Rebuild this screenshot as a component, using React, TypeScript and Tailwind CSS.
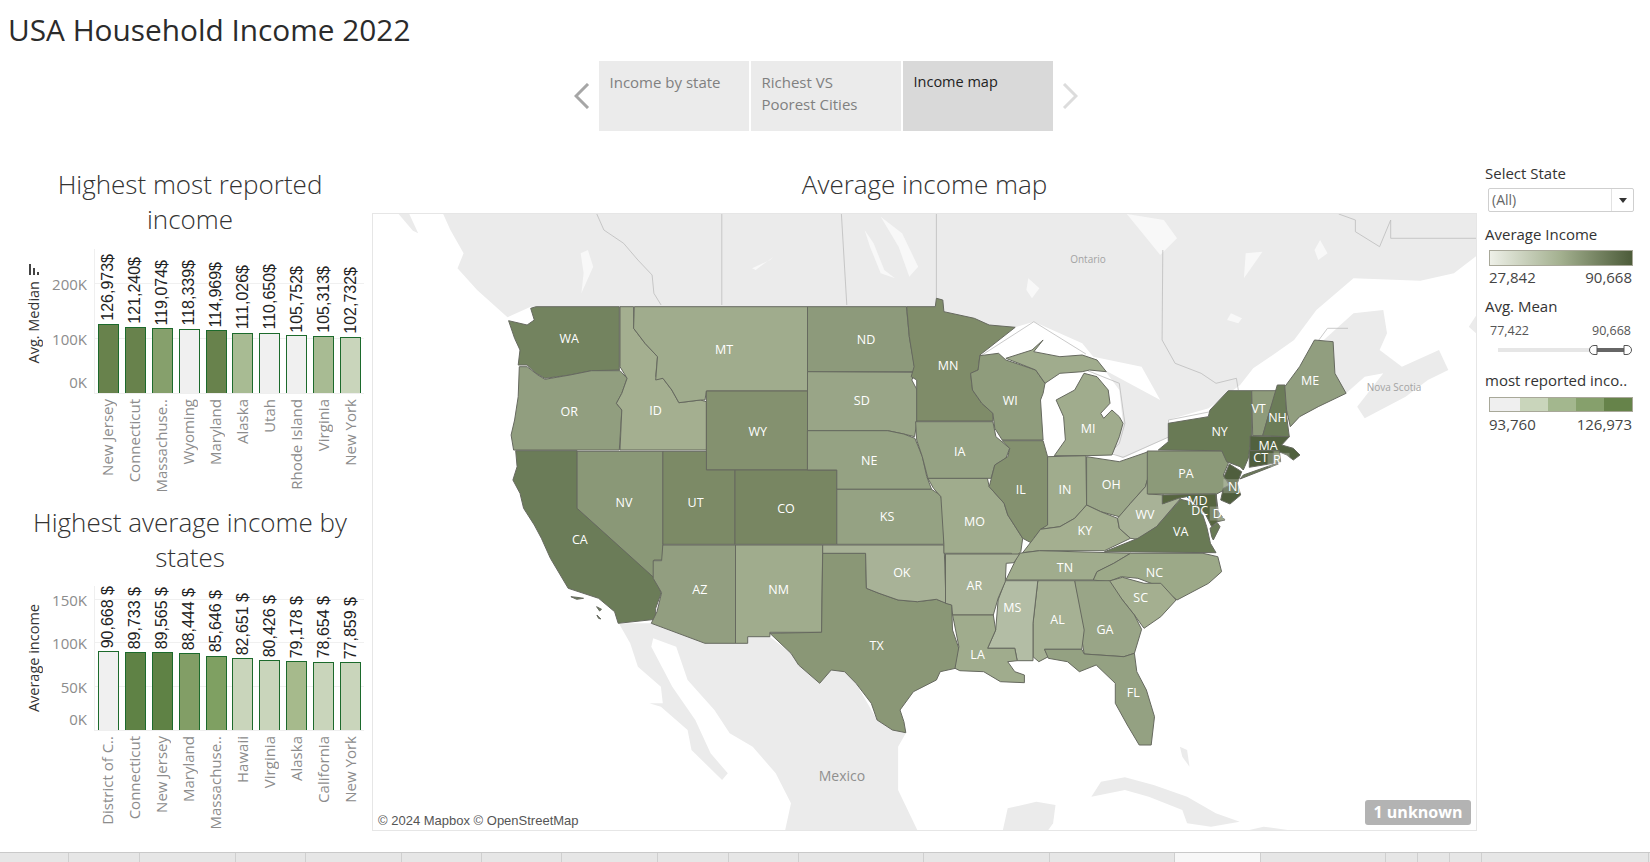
import React from "react";

type Z = { ox: number; sx: number; oy: number; sy: number };
const Z5: Z = { ox: 370, sx: 2.8, oy: 210, sy: 3 };
const Z6: Z = { ox: 900, sx: 2.69, oy: 210, sy: 3 };
const Z7: Z = { ox: 370, sx: 2.613, oy: 540, sy: 3 };
const Z8: Z = { ox: 900, sx: 2.09, oy: 540, sy: 3 };
const Z9: Z = { ox: 1130, sx: 3, oy: 380, sy: 3 };

const conv = (s: string, z: Z) =>
  s
    .trim()
    .split(/\s+/)
    .map((p) => {
      const [x, y] = p.split(",").map(Number);
      return `${(z.ox + x / z.sx).toFixed(1)},${(z.oy + y / z.sy).toFixed(1)}`;
    })
    .join(" ");

const LAND: [string, Z][] = [
  ["205,12 1568,12 1568,290 450,290 385,322 300,240 245,175 262,130 225,60", Z5],
  ["80,12 110,12 135,70 120,62", Z5],
  ["0,12 1560,12 1560,130 1490,190 1400,212 1220,205 1120,300 1060,390 990,445 950,475 915,525 830,595 720,630 725,680 600,745 565,725 600,640 590,540 550,480 700,570 650,470 520,440 490,400 360,335 310,352 240,345 115,305 98,265 95,290 0,290", Z6],
  ["1165,395 1140,390 1220,310 1300,300 1310,370 1290,420 1350,470 1450,420 1475,480 1420,510 1360,560 1250,625 1230,590 1300,490 1250,500 1200,550 1170,490", Z6],
  ["1560,300 1530,350 1560,380", Z6],
  ["650,250 735,250 875,310 987,310 987,290 1045,290 1100,340 1120,375 1175,430 1205,390 1240,395 1270,430 1325,540 1365,570 1400,580 1380,620 1380,750 1430,870 1085,870 1100,790 1060,700 1000,620 940,580 900,510 830,420 800,320 740,295 735,320 790,440 850,540 890,640 935,700 920,720 840,630 830,570 760,500 730,490 765,490 760,440 700,380 680,310", Z7],
  ["400,770 420,725 470,712 530,735 600,770 660,820 710,845 650,860 600,850 590,810 520,770 470,750", Z8],
  ["215,870 225,805 285,785 325,795 320,850 310,870", Z8],
  ["0,775 35,870 0,870", Z8],
  ["730,870 760,860 810,870", Z8],
  ["585,620 600,630 605,680 590,650", Z8],
];

const WHITE: [string, Z][] = [
  ["590,130 610,120 625,170 600,230 592,250 598,190", Z5],
  ["1120,150 1130,140 1080,180 1070,175", Z5],
  ["1385,60 1410,100 1440,180 1470,205 1430,190 1400,110", Z5],
  ["1430,20 1490,70 1535,170 1510,200 1480,110", Z5],
  ["345,205 375,235 355,265 340,240", Z6],
  ["890,310 920,325 910,340 880,330", Z6],
  ["1130,90 1150,130 1125,150 1115,120", Z6],
  ["930,130 975,125 925,205", Z6],
  ["610,12 710,30 745,85 700,135 660,80", Z6],
];

const LINES: [string, Z][] = [
  ["985,12 985,285", Z5],
  ["1320,12 1335,285", Z5],
  ["635,12 655,60 710,100 750,150 790,195 795,250 815,285", Z5],
  ["98,12 98,265", Z6],
  ["707,120 705,390 740,460 810,490 850,520 905,505 910,540", Z6],
  ["1180,12 1225,30 1225,65 1290,110 1320,30 1320,85 1560,85", Z6],
  ["1120,400 1150,355 1205,355", Z6],
  ["218,437 360,335 500,432", Z6],
  ["505,482 590,520 605,640 590,700 565,730 600,742 725,680 722,630 835,605", Z6],
];

const STATES: [string, Z, string][] = [
  ["465,290 698,290 698,480 620,482 560,495 490,505 465,490 440,465 415,465 420,420 405,385 388,332 440,345 460,330 450,295", Z5, "#73835f"],
  ["418,470 440,470 470,495 490,508 560,495 620,482 700,482 720,505 705,550 690,580 705,600 698,720 402,720 395,675 405,630 415,560", Z5, "#919e7f"],
  ["408,722 580,722 580,895 800,1105 815,1150 800,1195 800,1228 695,1240 685,1205 640,1165 555,1135 505,1045 480,985 460,945 430,895 420,850 400,810 412,770", Z5, "#6b7c58"],
  ["525,170 540,172 558,175 540,178", Z7, "#6b7c58"],
  ["592,200 605,208 600,213", Z7, "#6b7c58"],
  ["593,225 603,237 597,235", Z7, "#6b7c58"],
  ["580,724 820,724 820,1050 795,1050 797,1105 580,895", Z5, "#8a9877"],
  ["700,290 738,290 738,355 770,400 805,440 800,500 820,505 845,540 865,578 925,570 942,575 942,720 700,720 705,600 690,580 705,550 720,505 700,470", Z5, "#a4af90"],
  ["740,290 1225,290 1225,543 942,543 938,570 925,570 865,578 845,540 820,505 800,510 805,440 770,400 738,355", Z5, "#a0ac8d"],
  ["942,543 1225,543 1225,780 942,780", Z5, "#84916f"],
  ["820,724 942,724 942,780 1022,780 1022,1003 820,1003", Z5, "#7c8a66"],
  ["1022,780 1307,780 1307,1003 1022,1003", Z5, "#788662"],
  ["765,15 955,15 955,310 875,310 735,250 750,215 762,158 740,115 740,62 762,62", Z7, "#929e80"],
  ["955,15 1183,15 1180,277 1045,277 1045,290 987,290 987,310 955,310", Z7, "#a0ac8d"],
  ["1183,40 1295,40 1297,145 1330,160 1380,180 1430,185 1480,178 1520,195 1522,270 1540,330 1530,385 1490,395 1480,420 1420,455 1385,510 1395,545 1400,578 1365,570 1325,540 1310,490 1270,430 1240,395 1205,390 1175,430 1120,375 1100,340 1045,280 1180,277", Z7, "#8a9776"],
  ["1183,15 1500,15 1505,190 1480,178 1430,185 1380,180 1330,160 1297,145 1295,40 1183,40", Z7, "#a8b297"],
  ["1225,290 1502,290 1510,380 1527,485 1225,485", Z5, "#8d9a7b"],
  ["1225,485 1527,487 1517,510 1532,540 1532,630 1525,680 1495,672 1450,662 1225,662", Z5, "#99a587"],
  ["-249,662 -33,662 10,672 40,685 60,740 72,800 85,838 -170,838 -170,780 -249,780", Z6, "#95a283"],
  ["-170,838 85,838 108,855 118,885 118,1003 -170,1003", Z6, "#95a283"],
  ["75,805 235,805 240,830 280,880 290,915 330,985 325,1025 300,1055 285,1055 300,1030 118,1030 118,1003 110,860 90,835", Z6, "#a0ac8d"],
  ["42,635 250,635 258,680 295,715 285,745 255,765 245,805 75,805 60,740 45,690", Z6, "#95a283"],
  ["18,290 95,290 98,265 115,270 118,305 200,325 240,345 310,352 215,435 210,480 190,490 195,540 220,580 250,610 250,633 45,633 45,510 30,500 38,470 25,380", Z6, "#7f8c69"],
  ["215,437 265,430 285,450 365,480 390,520 385,550 378,570 385,690 275,690 255,655 250,610 220,580 195,540 190,490 210,480", Z6, "#8f9c7c"],
  ["285,445 355,420 385,390 360,425 430,440 490,435 530,450 555,485 510,480 490,485 430,490 390,520 365,480", Z6, "#a0ac8d"],
  ["415,737 445,690 440,620 420,570 470,540 495,490 530,500 560,540 565,580 540,610 548,625 570,600 590,620 600,640 590,680 570,735 500,737", Z6, "#a0ac8d"],
  ["275,692 385,692 397,740 397,950 378,960 360,985 355,1000 330,985 290,915 280,880 240,830 255,765 290,740 295,715", Z6, "#84916f"],
  ["397,740 500,737 502,885 470,925 430,950 378,958 397,945", Z6, "#a0ac8d"],
  ["502,740 590,755 668,725 668,800 660,830 620,880 590,920 540,905 502,885", Z6, "#9aa688"],
  ["330,1028 360,985 378,958 430,950 470,925 502,885 540,905 585,925 590,955 620,985 550,1022 375,1022", Z6, "#a4af90"],
  ["668,800 668,852 710,855 710,880 740,860 755,865 690,950 640,988 620,985 590,955 585,925 620,880 660,830", Z6, "#a8b297"],
  ["550,1025 640,985 690,950 755,868 780,875 810,900 825,950 835,1000 850,1028", Z6, "#697a55"],
  ["285,1110 320,1030 375,1022 620,1030 575,1060 530,1085 520,1110", Z6, "#a0ac8d"],
  ["520,1110 530,1085 575,1060 620,1030 815,1030 855,1040 865,1085 830,1120 745,1170 700,1130 640,1105 595,1100 560,1115", Z6, "#9ca988"],
  ["432,125 465,112 510,130 545,130 577,180 545,230 510,265 490,225 465,180", Z8, "#a4af90"],
  ["365,122 438,122 465,180 490,225 505,268 490,340 468,350 385,342 378,280", Z8, "#99a587"],
  ["288,122 365,122 385,270 380,328 302,328 310,350 290,365 278,350 278,250", Z8, "#a6b194"],
  ["220,122 288,122 278,250 278,362 245,362 240,325 183,325 200,270 205,180", Z8, "#b3bda5"],
  ["95,42 250,42 238,68 222,70 220,125 205,175 195,225 110,225 108,195 95,190", Z8, "#a8b297"],
  ["110,225 195,225 200,270 183,325 240,325 245,362 225,365 240,395 260,405 260,428 210,425 175,395 125,392 115,385 123,320", Z8, "#a0ac8d"],
  ["302,328 380,328 385,342 468,350 490,340 495,395 515,450 532,530 525,615 500,615 475,555 450,490 450,430 410,375 375,395 350,365 310,355", Z8, "#94a182"],
  ["52,213 278,213 295,250 280,285 300,320 260,342 52,342", Z9, "#8c9a79"],
  ["85,210 115,185 115,130 235,110 240,90 295,32 365,32 365,165 355,235 340,270 330,260 290,245 275,212", Z9, "#697a55"],
  ["340,285 440,250 445,252 330,297", Z9, "#697a55"],
  ["365,32 442,32 420,90 398,167 368,167", Z9, "#8e9b7b"],
  ["442,15 465,15 470,110 478,170 398,167 420,90", Z9, "#6b7c58"],
  ["1035,530 1075,470 1115,390 1165,395 1170,490 1200,550 1125,590 1075,620 1050,650 1040,600", Z6, "#919e7f"],
  ["360,168 478,170 455,195 490,205 510,225 490,240 470,225 440,212 360,212", Z9, "#51613f"],
  ["358,212 430,212 430,250 358,262", Z9, "#4f5e3d"],
  ["430,212 448,212 452,245 432,250", Z9, "#7d8a67"],
  ["298,252 335,275 322,310 332,345 300,372 272,360 280,325 300,315 282,290", Z9, "#4f5e3d"],
  ["97,345 258,342 262,425 245,440 225,400 205,380 170,350 145,355 97,372", Z9, "#56653f"],
  ["258,342 265,395 285,420 262,425", Z9, "#7d8a67"],
  ["240,445 262,428 270,440 250,480 245,470", Z9, "#697a55"],
];

const R = 1.0523;
const LABELS: [string, number, number][] = [
  ["WA", 541, 322], ["OR", 541, 391], ["CA", 551, 513], ["NV", 593, 478], ["ID", 623, 390], ["MT", 688, 332],
  ["WY", 720, 410], ["UT", 661, 478], ["CO", 747, 483], ["AZ", 665, 560], ["NM", 740, 560], ["ND", 823, 323],
  ["SD", 819, 381], ["NE", 826, 438], ["KS", 843, 491], ["OK", 857, 544], ["TX", 833, 613], ["MN", 901, 347],
  ["IA", 912, 429], ["MO", 926, 496], ["AR", 926, 556], ["LA", 929, 622], ["MS", 962, 577], ["AL", 1005, 589],
  ["GA", 1050, 598], ["FL", 1077, 658], ["WI", 960, 381], ["IL", 970, 465], ["IN", 1012, 465], ["OH", 1056, 460],
  ["KY", 1031, 504], ["TN", 1012, 539], ["MI", 1034, 407], ["WV", 1088, 489], ["VA", 1122, 505], ["NC", 1097, 544],
  ["SC", 1084, 568], ["PA", 1127, 450], ["NY", 1159, 410], ["VT", 1196, 388], ["NH", 1214, 397], ["ME", 1245, 362],
  ["MA", 1205, 423], ["CT", 1198, 435], ["RI", 1215, 437], ["NJ", 1173, 462], ["MD", 1138, 476], ["DC", 1140, 485],
  ["DE", 1160, 488],
];
const HALO = ["RI", "NJ", "DE"];

function UsMap() {
  return (
    <svg viewBox="373 214 1103 616" className="block w-full h-full">
      {LAND.map(([p, z], i) => (
        <polygon key={i} points={conv(p, z)} fill="#ebebeb" />
      ))}
      {WHITE.map(([p, z], i) => (
        <polygon key={i} points={conv(p, z)} fill="#f8f8f8" />
      ))}
      {LINES.map(([p, z], i) => (
        <polyline key={i} points={conv(p, z)} fill="none" stroke="#bdbdbd" strokeWidth="0.8" />
      ))}
      {STATES.map(([p, z, c], i) => (
        <polygon key={i} points={conv(p, z)} fill={c} stroke="#66695f" strokeWidth="1" strokeLinejoin="round" />
      ))}
      <text x={1088} y={263} fontSize="10" fill="#a3a3a3" textAnchor="middle">Ontario</text>
      <text x={1394} y={391} fontSize="10" fill="#a3a3a3" textAnchor="middle">Nova Scotia</text>
      <text x={842} y={781} fontSize="14" fill="#8f8f8f" textAnchor="middle">Mexico</text>
      {LABELS.filter((l) => HALO.includes(l[0])).map(([t, x, y]) => (
        <rect key={t} x={x * R - 11} y={y * R - 7} width="22" height="14" fill="#ffffff" opacity="0.22" />
      ))}
      {LABELS.map(([t, x, y]) => (
        <text key={t} x={x * R} y={y * R + 4.5} fontSize="12.5" fill="#ffffff" textAnchor="middle">{t}</text>
      ))}
    </svg>
  );
}

type Bar = { name: string; value: number; label: string; color: string };

const CHART1: Bar[] = [
  { name: "New Jersey", value: 126973, label: "126,973$", color: "#68824c" },
  { name: "Connecticut", value: 121240, label: "121,240$", color: "#68824c" },
  { name: "Massachuse..", value: 119074, label: "119,074$", color: "#86a06c" },
  { name: "Wyoming", value: 118339, label: "118,339$", color: "#f0f0f0" },
  { name: "Maryland", value: 114969, label: "114,969$", color: "#68824c" },
  { name: "Alaska", value: 111026, label: "111,026$", color: "#a8bb93" },
  { name: "Utah", value: 110650, label: "110,650$", color: "#f0f0f0" },
  { name: "Rhode Island", value: 105752, label: "105,752$", color: "#f0f0f0" },
  { name: "Virginia", value: 105313, label: "105,313$", color: "#a8bb93" },
  { name: "New York", value: 102732, label: "102,732$", color: "#c9d5bb" },
];

const CHART2: Bar[] = [
  { name: "District of C..", value: 90668, label: "90,668 $", color: "#f0f0f0" },
  { name: "Connecticut", value: 89733, label: "89,733 $", color: "#5f8245" },
  { name: "New Jersey", value: 89565, label: "89,565 $", color: "#5f8245" },
  { name: "Maryland", value: 88444, label: "88,444 $", color: "#829e66" },
  { name: "Massachuse..", value: 85646, label: "85,646 $", color: "#7fa062" },
  { name: "Hawaii", value: 82651, label: "82,651 $", color: "#c9d5bb" },
  { name: "Virginia", value: 80426, label: "80,426 $", color: "#c9d5bb" },
  { name: "Alaska", value: 79178, label: "79,178 $", color: "#a6ba8c" },
  { name: "California", value: 78654, label: "78,654 $", color: "#c9d5bb" },
  { name: "New York", value: 77859, label: "77,859 $", color: "#c9d5bb" },
];

function Chart({
  axis,
  sortIcon,
  data,
  ticks,
  pxPerUnit,
  labelsHeight,
}: {
  axis: string;
  sortIcon?: boolean;
  data: Bar[];
  ticks: [string, number][];
  pxPerUnit: number;
  labelsHeight: number;
}) {
  return (
    <div className="flex flex-col">
      <div className="flex h-[145px]">
        <div className="w-[25px] shrink-0" />
        <div className={"w-[18px] shrink-0 flex flex-col items-center justify-center gap-[5px] " + (sortIcon ? "pb-[15px]" : "")}>
          {sortIcon && (
            <svg width="11" height="12" viewBox="0 0 11 12">
              <rect x="0" y="0" width="2" height="11" fill="#444" />
              <rect x="4" y="4" width="2" height="7" fill="#444" />
              <rect x="8" y="8" width="2" height="3" fill="#444" />
            </svg>
          )}
          <span className="[writing-mode:vertical-rl] rotate-180 text-[14.5px] leading-[18px] font-medium text-[#333] whitespace-nowrap">{axis}</span>
        </div>
        <div className="w-[51px] shrink-0 relative">
          {ticks.map(([t, v]) => (
            <div
              key={t}
              className="absolute right-[7px] text-[15px] leading-[20px] text-[#8c8c8c]"
              style={{ bottom: v === 0 ? 2 : v * pxPerUnit - 9 }}
            >
              {t}
            </div>
          ))}
        </div>
        <div className="relative w-[270px] border-l border-b border-[#efefef] flex items-stretch">
          {ticks.map(([t, v]) =>
            v === 0 ? null : (
              <div key={t} className="absolute left-0 right-0 h-px bg-[#f0f0f0]" style={{ bottom: v * pxPerUnit }} />
            )
          )}
          {data.map((d) => (
            <div key={d.name} className="relative w-[27px] flex flex-col items-center justify-end">
              <span className="[writing-mode:vertical-rl] rotate-180 font-['Liberation_Sans',sans-serif] text-[16px] leading-[20px] text-[#222] whitespace-nowrap mb-[3px]">{d.label}</span>
              <div
                className="w-[21px] border-[1.5px] border-b-0 border-[#1c6a2c]"
                style={{ height: d.value * pxPerUnit, backgroundColor: d.color }}
              />
            </div>
          ))}
        </div>
      </div>
      <div className="flex" style={{ height: labelsHeight }}>
        <div className="w-[93px] shrink-0" />
        {data.map((d) => (
          <div key={d.name} className="w-[27px] flex justify-center items-start pt-[5px]">
            <span className="[writing-mode:vertical-rl] rotate-180 text-[15px] leading-[20px] text-[#8c8c8c] whitespace-nowrap">{d.name}</span>
          </div>
        ))}
      </div>
    </div>
  );
}

const Heading = ({ children, className = "" }: { children: React.ReactNode; className?: string }) => (
  <h2 className={"text-center text-[26px] leading-[35px] font-light text-[#333] " + className}>{children}</h2>
);

const STRIP = [69, 71, 96, 70, 96, 80, 80, 96, 71, 70, 125, 126, 125, 86, 125, 32, 32, 32, 167];

export default function App() {
  return (
    <div className="h-[862px] w-[1650px] overflow-hidden bg-white flex flex-col font-['Open_Sans',sans-serif]">
      <div className="h-[61px] shrink-0 pl-[8px] pt-[10px]">
        <h1 className="text-[29.8px] leading-[40px] font-normal text-[#2b2b2b]">USA Household Income 2022</h1>
      </div>

      <div className="h-[70px] shrink-0 flex items-center justify-center gap-[2px] pl-[1px]">
        <svg width="16" height="26" viewBox="0 0 16 26" className="mr-[7px]">
          <polyline points="14,1 2,13 14,25" fill="none" stroke="#a6a6a6" strokeWidth="3" />
        </svg>
        <div className="w-[150px] h-[70px] bg-[#ebebeb] px-[11px] pt-[10px] text-[15px] leading-[22px] text-[#808080]">Income by state</div>
        <div className="w-[150px] h-[70px] bg-[#ebebeb] px-[11px] pt-[10px] text-[15px] leading-[22px] text-[#808080]">Richest VS<br />Poorest Cities</div>
        <div className="w-[150px] h-[70px] bg-[#d9d9d9] px-[11px] pt-[10px] text-[14.5px] leading-[22px] text-[#222]">Income map</div>
        <svg width="16" height="26" viewBox="0 0 16 26" className="ml-[7px]">
          <polyline points="2,1 14,13 2,25" fill="none" stroke="#dcdcdc" strokeWidth="3" />
        </svg>
      </div>

      <div className="h-[36px] shrink-0" />

      <div className="h-[685px] shrink-0 flex">
        <div className="w-[372px] shrink-0 flex flex-col">
          <Heading className="pl-[8px]">Highest most reported<br />income</Heading>
          <div className="h-[12px]" />
          <Chart axis="Avg. Median" sortIcon data={CHART1} ticks={[["200K", 200000], ["100K", 100000], ["0K", 0]]} pxPerUnit={0.000545} labelsHeight={111} />
          <Heading className="pl-[8px]">Highest average income by<br />states</Heading>
          <div className="h-[11px]" />
          <Chart axis="Average income" data={CHART2} ticks={[["150K", 150000], ["100K", 100000], ["50K", 50000], ["0K", 0]]} pxPerUnit={0.00087} labelsHeight={100} />
        </div>

        <div className="w-[1105px] shrink-0 flex flex-col">
          <Heading>Average income map</Heading>
          <div className="h-[11px]" />
          <div className="relative h-[618px] border border-[#e6e6e6]">
            <UsMap />
            <div className="absolute left-[2px] bottom-[1px] px-[3px] h-[17px] bg-white/80 font-['Liberation_Sans',sans-serif] text-[13px] leading-[17px] text-[#555] whitespace-nowrap">© 2024 Mapbox © OpenStreetMap</div>
            <div className="absolute right-[5px] bottom-[5px] w-[106px] h-[25px] rounded-[3px] bg-[#b3b3b3] text-white text-[16px] font-bold leading-[25px] text-center">1 unknown</div>
          </div>
        </div>

        <div className="ml-[8px] w-[160px] shrink-0 flex flex-col text-[#333]">
          <div className="-mt-[2px] text-[15px] leading-[16px]">Select State</div>
          <div className="mt-[7px] ml-[3px] w-[146px] h-[24px] border border-[#cfcfcf] rounded-[2px] flex items-center">
            <span className="flex-1 pl-[3px] text-[14px] leading-[20px] text-[#666]">(All)</span>
            <span className="w-[22px] h-full border-l border-[#e2e2e2] flex items-center justify-center">
              <svg width="8" height="5" viewBox="0 0 8 5"><polygon points="0,0 8,0 4,5" fill="#333" /></svg>
            </span>
          </div>

          <div className="mt-[13px] text-[15px] leading-[18px]">Average Income</div>
          <div className="mt-[7px] ml-[4px] w-[144px] h-[16px] border border-[#a8a899] bg-gradient-to-r from-[#eef0e8] via-[#a3b08f] to-[#4d5c3a]" />
          <div className="mt-[2px] ml-[4px] w-[143px] flex justify-between text-[15px] leading-[18px] text-[#444]">
            <span>27,842</span><span>90,668</span>
          </div>

          <div className="mt-[11px] text-[15px] leading-[18px]">Avg. Mean</div>
          <div className="mt-[8px] ml-[5px] w-[141px] flex justify-between text-[12.5px] leading-[16px] text-[#555]">
            <span>77,422</span><span>90,668</span>
          </div>
          <div className="mt-[6px] ml-[13px] w-[135px] h-[10px] flex items-center">
            <div className="w-[92px] h-[4px] bg-[#e6e6e6]" />
            <svg width="43" height="10" viewBox="0 0 43 10" className="shrink-0 -ml-[1px]">
              <rect x="3" y="3" width="37" height="4" fill="#666" />
              <path d="M8 .5H5a4.5 4.5 0 0 0 0 9h3z" fill="#fff" stroke="#555" />
              <path d="M35 .5h3a4.5 4.5 0 0 1 0 9h-3z" fill="#fff" stroke="#555" />
            </svg>
          </div>

          <div className="mt-[16px] text-[15px] leading-[18px] whitespace-nowrap">most reported inco..</div>
          <div className="mt-[8px] ml-[4px] w-[144px] h-[15px] border border-[#a8a899] flex">
            <div className="w-[30px] bg-[#efefef]" />
            <div className="w-[28px] bg-[#c9d5bb]" />
            <div className="w-[28px] bg-[#a3b78e]" />
            <div className="w-[28px] bg-[#86a06c]" />
            <div className="flex-1 bg-[#66834a]" />
          </div>
          <div className="mt-[3px] ml-[4px] w-[143px] flex justify-between text-[15px] leading-[18px] text-[#444]">
            <span>93,760</span><span>126,973</span>
          </div>
        </div>
      </div>

      <div className="h-[10px] shrink-0 flex bg-[#e6e6e6] border-t border-[#c9c9c9]">
        {STRIP.map((w, i) => (
          <div key={i} className={"shrink-0 border-r border-[#cfcfcf] " + (i === 13 ? "bg-[#f7f7f7]" : "")} style={{ width: w }} />
        ))}
      </div>
    </div>
  );
}
